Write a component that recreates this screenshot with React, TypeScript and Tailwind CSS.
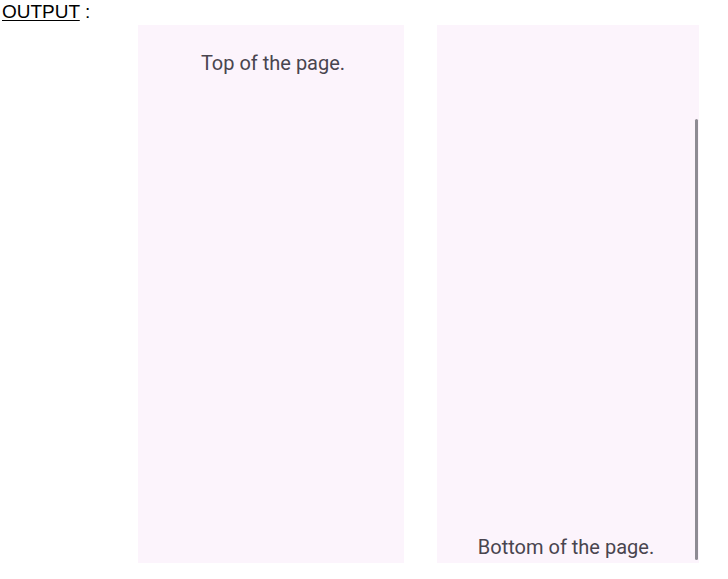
import React from 'react';

const App = () => {
  return (
    <div className="w-[728px] h-[579px] bg-white relative overflow-hidden">
      {/* Label */}
      <p className="absolute left-[2px] top-[0px] text-[19px] leading-[24px] text-black font-['Liberation_Sans',sans-serif]">
        <span className="underline underline-offset-2">OUTPUT</span> :
      </p>

      {/* Two phone screens */}
      <div className="flex gap-[33px] pt-[25px] pl-[138px] font-['Roboto',sans-serif]">
        <div className="w-[266px] h-[538px] bg-[#fcf4fc] flex flex-col items-center">
          <p className="mt-[24px] ml-[4px] text-[20px] leading-[28px] text-[#49454f]">Top of the page.</p>
        </div>

        <div className="w-[262px] h-[538px] bg-[#fcf4fc] flex">
          <div className="flex-1 flex flex-col items-center justify-end">
            <p className="mb-[2px] text-[20px] leading-[28px] text-[#49454f]">Bottom of the page.</p>
          </div>
          <div className="w-[4px] pt-[94px] pb-[3px] flex justify-start">
            <div className="w-[3px] h-full bg-[#8e8b93] rounded-full" />
          </div>
        </div>
      </div>
    </div>
  );
};

export default App;
